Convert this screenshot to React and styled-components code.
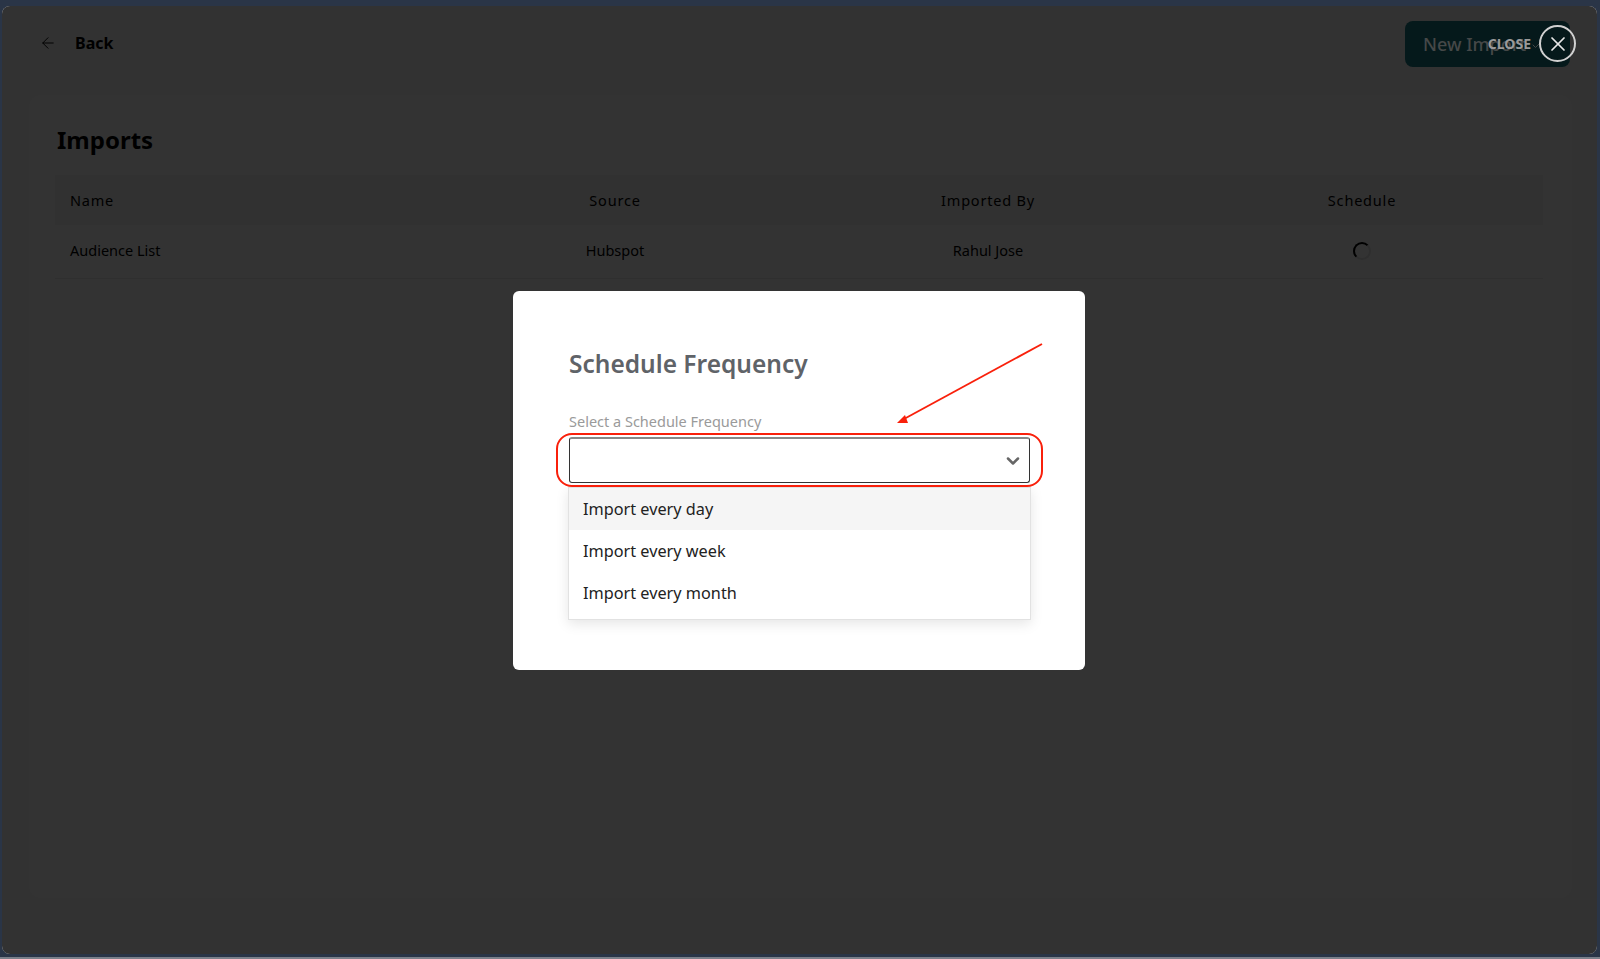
import styled, { createGlobalStyle } from "styled-components";
import { ArrowLeft, X, ChevronDown, Check } from "lucide-react";

const options = ["Import every day", "Import every week", "Import every month"];

export default function App() {
    return (
        <>
            <GlobalStyle />
            <Shell>
                <Header>
                    <BackLink>
                        <ArrowLeft size={18} strokeWidth={1.25} />
                        <span>Back</span>
                    </BackLink>
                    <NewImport>New Import <Check size={12} /></NewImport>
                </Header>
                <Card>
                    <Heading>Imports</Heading>
                    <HeadRow>
                        <Cell>Name</Cell>
                        <Cell $center>Source</Cell>
                        <Cell $center>Imported By</Cell>
                        <Cell $center>Schedule</Cell>
                    </HeadRow>
                    <BodyRow>
                        <Cell>Audience List</Cell>
                        <Cell $center>Hubspot</Cell>
                        <Cell $center>Rahul Jose</Cell>
                        <Cell $center><Spinner /></Cell>
                    </BodyRow>
                </Card>
                <Scrim>
                    <Modal>
                        <Title>Schedule Frequency</Title>
                        <FieldLabel>Select a Schedule Frequency</FieldLabel>
                        <SelectBox>
                            <ChevronDown size={20} strokeWidth={3} color="#666" />
                            <Highlight />
                        </SelectBox>
                        <Menu>
                            {options.map((option, i) => (
                                <Option key={option} $active={i === 0}>{option}</Option>
                            ))}
                        </Menu>
                        <Pointer width="160" height="90" viewBox="0 0 160 90">
                            <line x1="152" y1="2" x2="14" y2="77" stroke="#f9200b" strokeWidth="1.9" />
                            <polygon points="7,81 18,81 15,73" fill="#f9200b" />
                        </Pointer>
                    </Modal>
                    <CloseBar>
                        <CloseLabel>CLOSE</CloseLabel>
                        <CloseButton><X size={24} strokeWidth={1.75} /></CloseButton>
                    </CloseBar>
                </Scrim>
            </Shell>
        </>
    );
}

const GlobalStyle = createGlobalStyle`
    html, body {
        margin: 0;
        height: 959px;
        overflow: hidden;
        background: #2a3547;
        font-family: "Noto Sans", "Liberation Sans", sans-serif;
    }
    body {
        border-bottom: 2px solid #7a808a;
        box-sizing: border-box;
    }
`;

const Shell = styled.div`
    position: relative;
    box-sizing: border-box;
    width: 1595px;
    height: 948px;
    margin: 6px 0 0 2px;
    border-radius: 8px;
    overflow: hidden;
    background: #f8f8f8;
`;

const Header = styled.header`
    height: 89px;
    box-sizing: border-box;
    padding: 15px 27px 0 37px;
    display: flex;
    align-items: flex-start;
    justify-content: space-between;
`;

const BackLink = styled.div`
    display: flex;
    align-items: center;
    gap: 18px;
    height: 44px;
    font-size: 16px;
    font-weight: 700;
    color: #000;
`;

const NewImport = styled.button`
    position: relative;
    z-index: 1;
    width: 165px;
    height: 46px;
    border: none;
    border-radius: 8px;
    background: #05191b;
    color: #454848;
    font-family: inherit;
    font-size: 18px;
    font-weight: 500;
    text-align: left;
    padding: 0 0 0 18px;
`;

const Card = styled.section`
    margin: 0 25px 0 27px;
    height: 803px;
    box-sizing: border-box;
    padding: 26px 29px 0 26px;
    border-radius: 12px;
    background: #ffffff;
`;

const Heading = styled.h1`
    margin: 0 0 17px 2px;
    font-size: 24px;
    line-height: 37px;
    font-weight: 700;
    color: #000;
`;

const Row = styled.div`
    display: grid;
    grid-template-columns: 382px 356px 390px 358px;
    align-items: center;
`;

const HeadRow = styled(Row)`
    height: 50px;
    font-size: 14.5px;
    letter-spacing: 0.8px;
    background: #f3f3f3;
`;

const BodyRow = styled(Row)`
    height: 54px;
    padding-bottom: 3px;
    box-sizing: border-box;
    font-size: 14.5px;
    border-bottom: 1px solid #ececec;
`;

const Cell = styled.div`
    color: #000;
    padding-left: ${(props) => (props.$center ? "0" : "15px")};
    text-align: ${(props) => (props.$center ? "center" : "left")};
`;

const Spinner = styled.div`
    display: block;
    margin: 2px auto 0;
    width: 14px;
    height: 14px;
    border-radius: 50%;
    border: 2px solid #e4e4e4;
    border-top-color: #000;
    border-left-color: #000;
`;

const Scrim = styled.div`
    position: absolute;
    inset: 0;
    display: flex;
    align-items: center;
    justify-content: center;
    padding-right: 1px;
    background: rgba(0, 0, 0, 0.8);
`;

const Modal = styled.div`
    position: relative;
    width: 572px;
    height: 379px;
    box-sizing: border-box;
    padding: 55px 55px 0 56px;
    border-radius: 6px;
    background: #fff;
`;

const Title = styled.h2`
    margin: 0 0 29px;
    font-size: 24.5px;
    line-height: 36px;
    font-weight: 600;
    color: #5f6368;
`;

const FieldLabel = styled.label`
    display: block;
    font-size: 14.5px;
    line-height: 20px;
    color: #9a9a9a;
    margin-bottom: 6px;
`;

const SelectBox = styled.div`
    position: relative;
    box-sizing: border-box;
    height: 46px;
    display: flex;
    align-items: center;
    justify-content: flex-end;
    padding: 1px 6px 0 0;
    border: 1px solid #333;
    border-top: 2px solid #888;
    border-radius: 3px;
    background: #fff;
`;

const Highlight = styled.div`
    position: absolute;
    inset: -6px -14px -5px -14px;
    border: 2px solid #f9200b;
    border-radius: 16px;
`;

const Menu = styled.ul`
    list-style: none;
    margin: 4px -1px 0;
    padding: 0 0 5px;
    border: 1px solid #e2e2e2;
    background: #fff;
    box-shadow: 0 4px 12px rgba(0, 0, 0, 0.1);
`;

const Option = styled.li`
    height: 42px;
    line-height: 42px;
    padding-left: 14px;
    font-size: 16.25px;
    color: #222;
    background: ${(props) => (props.$active ? "#f5f5f5" : "#fff")};
`;

const Pointer = styled.svg`
    position: absolute;
    left: 377px;
    top: 51px;
`;

const CloseBar = styled.div`
    position: absolute;
    z-index: 2;
    top: 19px;
    right: 21px;
    display: flex;
    align-items: center;
    gap: 8px;
    color: #e8e8e8;
`;

const CloseLabel = styled.span`
    font-size: 14px;
    font-weight: 700;
    color: #9a9a9a;
`;

const CloseButton = styled.div`
    width: 33px;
    height: 33px;
    border: 2px solid #d0d0d0;
    border-radius: 50%;
    display: flex;
    align-items: center;
    justify-content: center;
`;
